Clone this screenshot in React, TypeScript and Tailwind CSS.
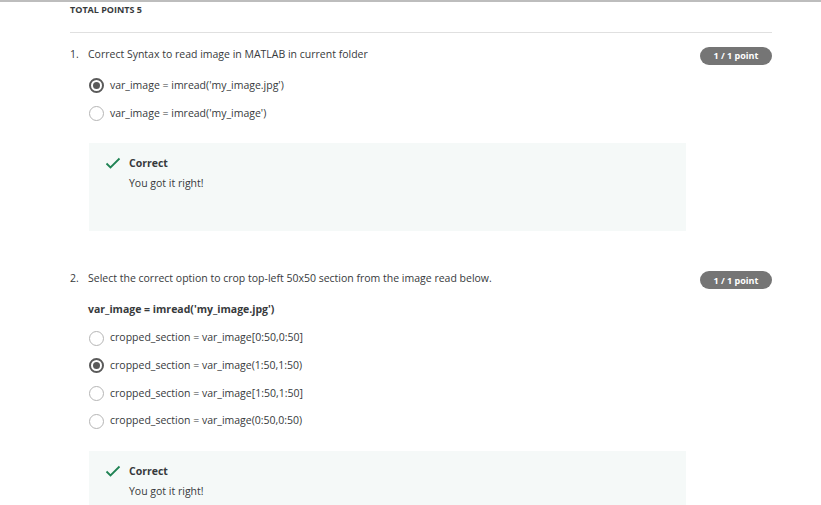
import React from "react";

function Radio({ checked }: { checked: boolean }) {
  return checked ? (
    <span className="flex h-[15px] w-[15px] items-center justify-center rounded-full border-2 border-[#5a5a5a] bg-white">
      <span className="h-[7px] w-[7px] rounded-full bg-[#5a5a5a]" />
    </span>
  ) : (
    <span className="h-[15px] w-[15px] rounded-full border border-[#b5b5b5] bg-white" />
  );
}

function Option({ label, checked }: { label: string; checked: boolean }) {
  return (
    <div className="flex h-[27.67px] items-center gap-[6px]">
      <Radio checked={checked} />
      <span className="text-[10.5px] text-[#373a3c]">{label}</span>
    </div>
  );
}

function Badge() {
  return (
    <span className="flex h-[18px] w-[72px] items-center justify-center rounded-full bg-[#757575] text-[9px] font-bold text-white">
      1 / 1 point
    </span>
  );
}

function Feedback({ tall }: { tall: boolean }) {
  return (
    <div className={`ml-[19px] flex w-[597px] gap-[8px] bg-[#f5f9f8] pl-[16px] pt-[13px] ${tall ? "h-[88px]" : "h-[60px]"}`}>
      <svg width="16" height="16" viewBox="0 0 16 16" className="mt-[-1px]">
        <path d="M1.5 8.5 L5.5 12.5 L14.5 3.5" fill="none" stroke="#1f8354" strokeWidth="1.8" />
      </svg>
      <div className="flex flex-col">
        <span className="text-[10.5px] font-bold leading-[14px] text-[#373a3c]">Correct</span>
        <span className="mt-[6px] text-[10.5px] leading-[14px] text-[#373a3c]">You got it right!</span>
      </div>
    </div>
  );
}

export default function App() {
  return (
    <div
      className="min-h-[505px] w-full overflow-hidden border-t-2 border-[#bdbdbd] bg-white"
      style={{ fontFamily: '"Open Sans", sans-serif' }}
    >
      <div className="pl-[70px] pr-[49px]">
        <div className="flex h-[31px] items-start border-b border-[#e0e0e0] pt-[2px]">
          <span className="text-[9px] font-bold leading-[12px] text-[#373a3c]">TOTAL POINTS 5</span>
        </div>

        <div className="mt-[14px] flex items-start justify-between">
          <div className="flex text-[10.5px] leading-[14px] text-[#373a3c]">
            <span className="w-[18px]">1.</span>
            <span>Correct Syntax to read image in MATLAB in current folder</span>
          </div>
          <Badge />
        </div>
        <div className="ml-[19px] mt-[7px] flex flex-col">
          <Option label="var_image = imread('my_image.jpg')" checked={true} />
          <Option label="var_image = imread('my_image')" checked={false} />
        </div>
        <div className="mt-[16px]">
          <Feedback tall={true} />
        </div>

        <div className="mt-[40px] flex items-start justify-between">
          <div className="flex text-[10.5px] leading-[14px] text-[#373a3c]">
            <span className="w-[18px]">2.</span>
            <span>Select the correct option to crop top-left 50x50 section from the image read below.</span>
          </div>
          <Badge />
        </div>
        <div className="ml-[18px] mt-[13px] text-[10.5px] font-bold leading-[14px] text-[#373a3c]">
          var_image = imread('my_image.jpg')
        </div>
        <div className="ml-[19px] mt-[8px] flex flex-col">
          <Option label="cropped_section = var_image[0:50,0:50]" checked={false} />
          <Option label="cropped_section = var_image(1:50,1:50)" checked={true} />
          <Option label="cropped_section = var_image[1:50,1:50]" checked={false} />
          <Option label="cropped_section = var_image(0:50,0:50)" checked={false} />
        </div>
        <div className="mt-[16px]">
          <Feedback tall={false} />
        </div>
      </div>
    </div>
  );
}
